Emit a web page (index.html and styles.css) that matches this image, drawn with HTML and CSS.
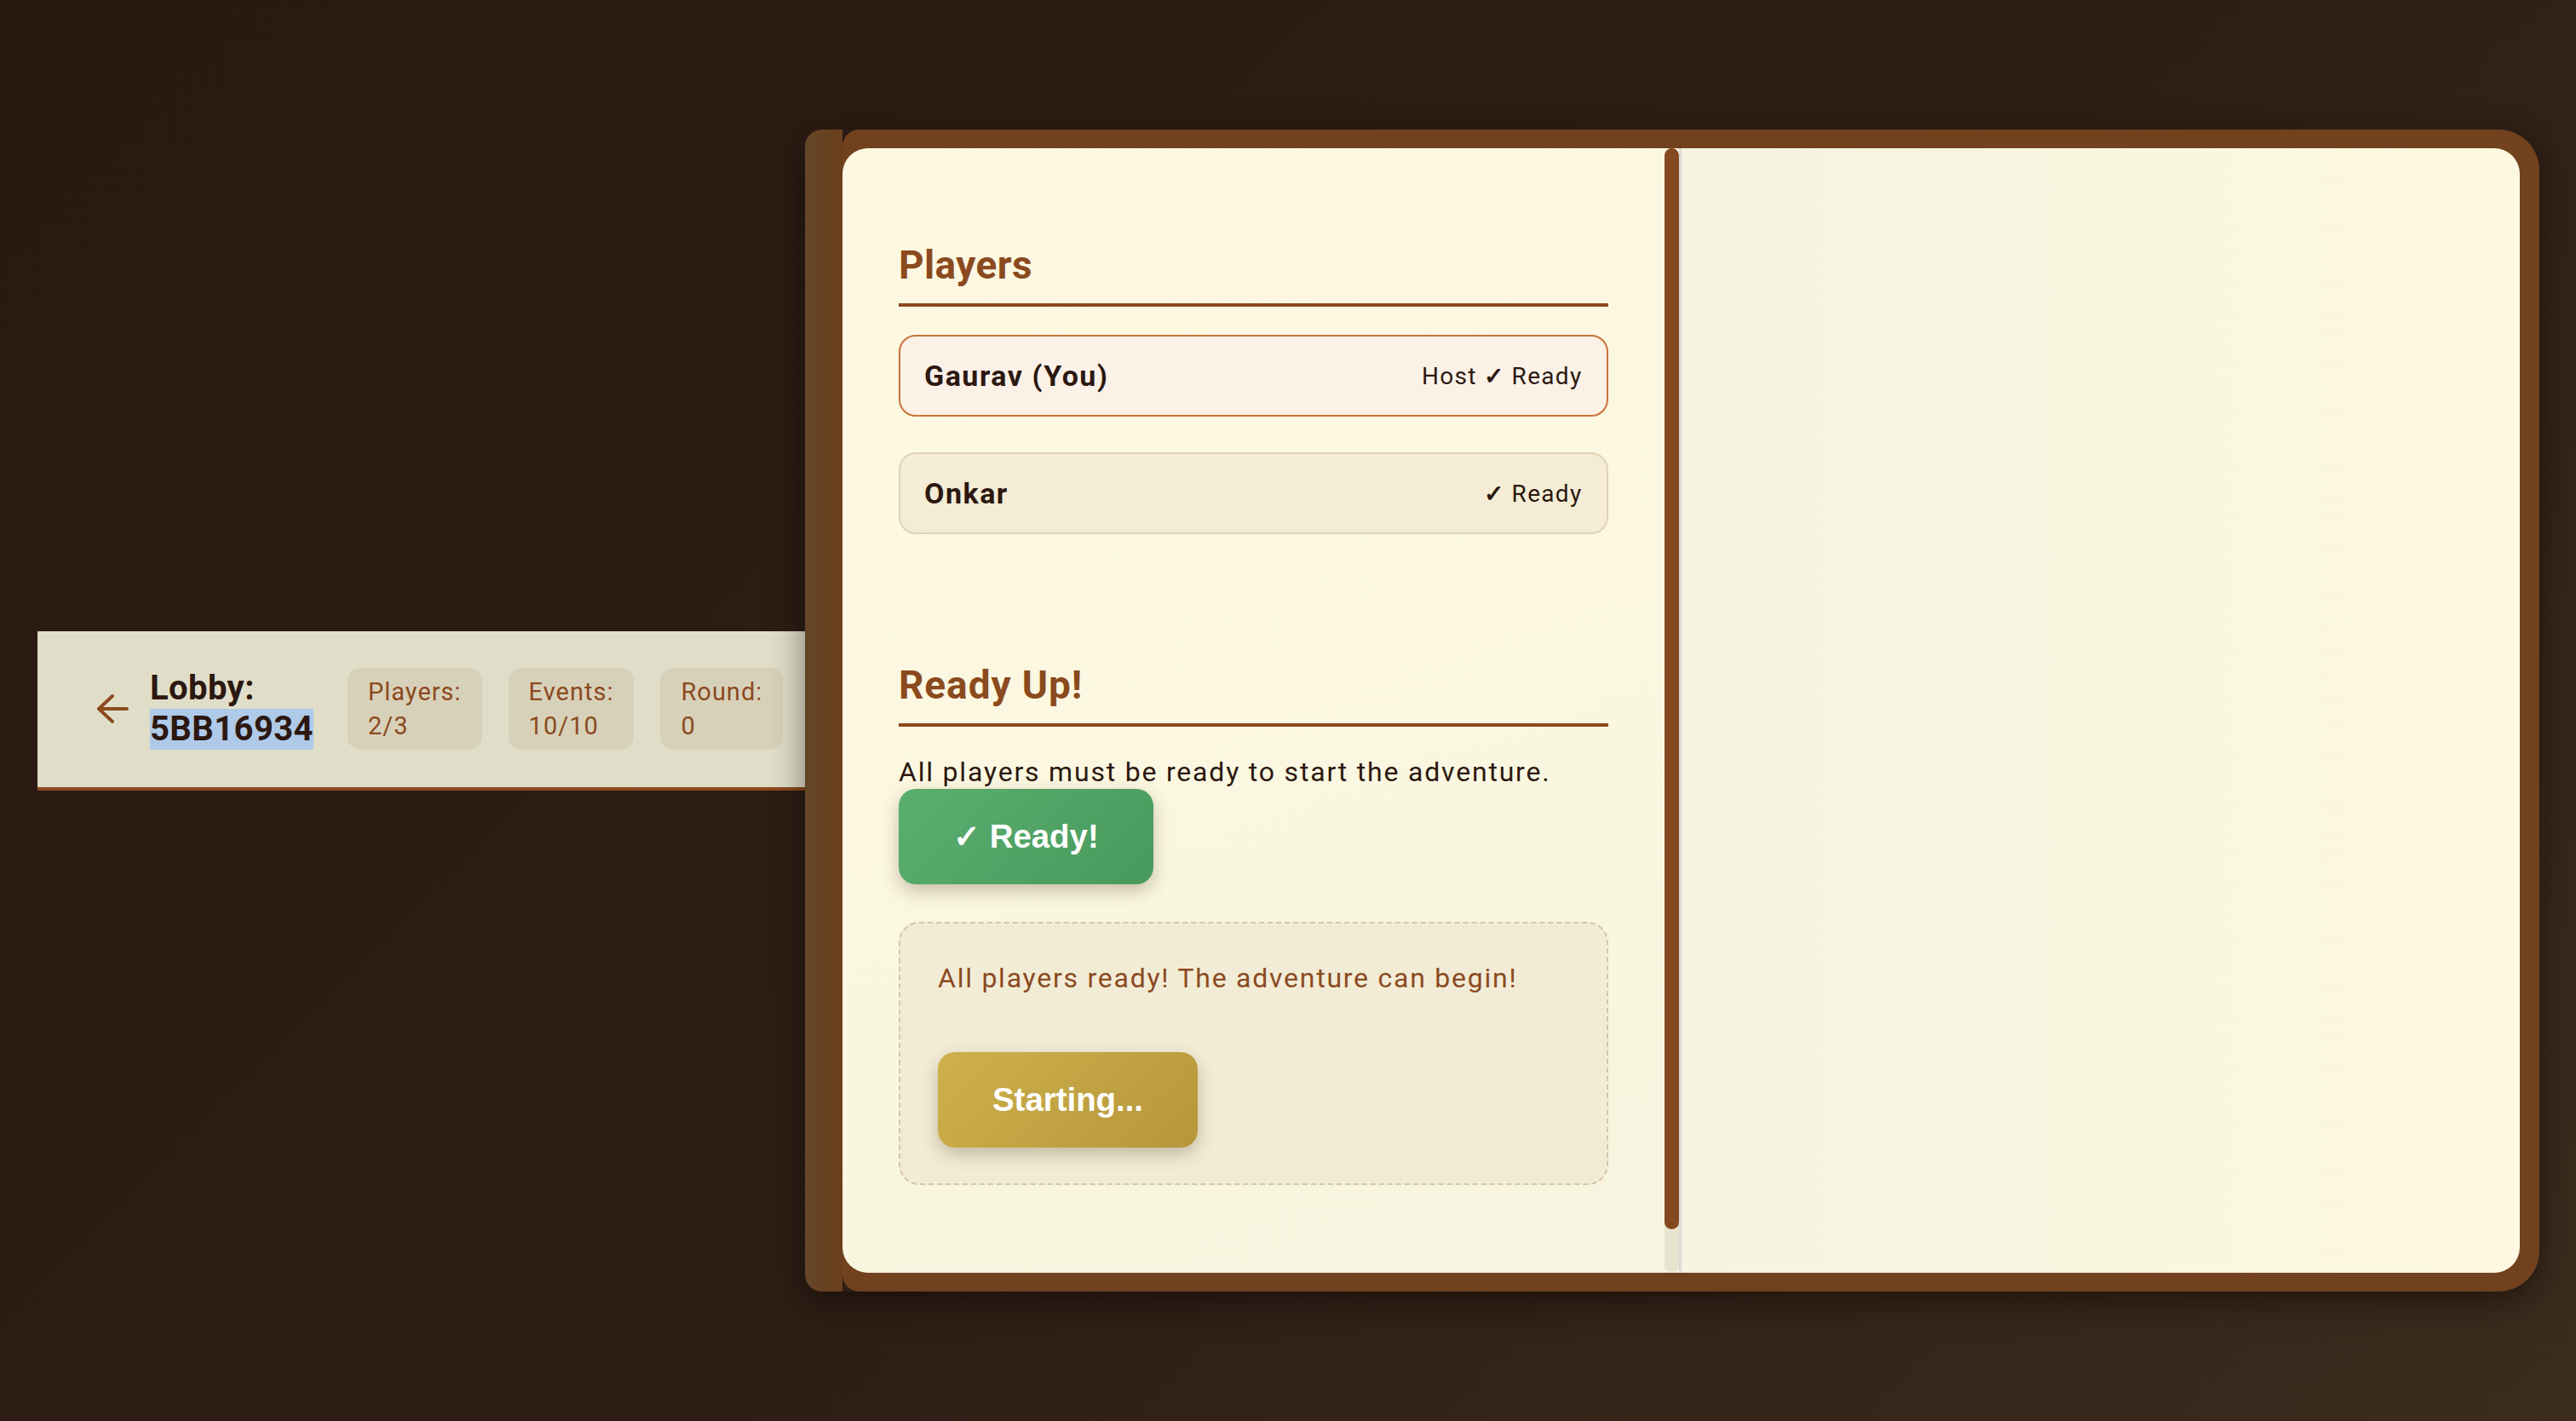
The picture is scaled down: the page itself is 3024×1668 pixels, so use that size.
FILE: index.html
```html
<!DOCTYPE html>
<html lang="en">
<head>
<meta charset="utf-8">
<title>Lobby 5BB16934</title>
<link rel="stylesheet" href="styles.css">
</head>
<body>
<div class="scene">
  <header class="lobby-bar">
    <button class="back-btn" aria-label="Back">
      <svg width="38" height="34" viewBox="0 0 38 34" fill="none" stroke="currentColor" stroke-width="3.8" stroke-linecap="round" stroke-linejoin="round"><path d="M36 17H3"/><path d="M19 2 3 17l16 15"/></svg>
    </button>
    <div class="lobby-title">
      <span>Lobby:</span>
      <span class="code">5BB16934</span>
    </div>
    <div class="stats">
      <div class="stat">Players:<br>2/3</div>
      <div class="stat">Events:<br>10/10</div>
      <div class="stat">Round:<br>0</div>
    </div>
  </header>

  <div class="book">
    <div class="spine"></div>
    <div class="cover">
      <div class="pages">
        <div class="page page-left">
          <div class="page-content">
            <section class="section players">
              <h2>Players</h2>
              <ul class="player-list">
                <li class="player me"><span class="name">Gaurav (You)</span><span class="status">Host <span class="check">✓</span> Ready</span></li>
                <li class="player"><span class="name">Onkar</span><span class="status"><span class="check">✓</span> Ready</span></li>
              </ul>
            </section>
            <section class="section ready">
              <h2>Ready Up!</h2>
              <p class="hint">All players must be ready to start the adventure.</p>
              <button class="btn btn-ready">✓ Ready!</button>
              <div class="start-box">
                <p>All players ready! The adventure can begin!</p>
                <button class="btn btn-start">Starting...</button>
              </div>
            </section>
          </div>
          <div class="scrollbar"><div class="scroll-thumb"></div></div>
        </div>
        <div class="page page-right"></div>
      </div>
    </div>
  </div>
</div>
</body>
</html>
```

FILE: styles.css
```css
html, body {
  margin: 0;
  padding: 0;
}

body {
  width: 3024px;
  height: 1668px;
  overflow: hidden;
  background: linear-gradient(135deg, #2a1911 0%, #2e1e15 55%, #3c2c1e 100%);
  font-family: Roboto, "Liberation Sans", sans-serif;
  color: #2c1810;
}

.scene {
  display: flex;
  align-items: center;
  height: 1668px;
  padding: 0 43px 0 44px;
  box-sizing: border-box;
}

/* ---------- lobby header ---------- */
.lobby-bar {
  flex: none;
  width: 901px;
  height: 187px;
  box-sizing: border-box;
  display: flex;
  align-items: center;
  padding: 0 22px 0 69px;
  background: #e0dec8;
  border-bottom: 4px solid #8b4a1e;
}

.back-btn {
  display: flex;
  padding: 0;
  margin: 0 25px 0 0;
  border: 0;
  background: none;
  color: #8b4a1e;
}

.lobby-title {
  display: flex;
  flex-direction: column;
  margin-right: 40px;
  font-size: 40px;
  line-height: 48px;
  font-weight: 700;
  letter-spacing: 0.4px;
  color: #2c1810;
}

.code {
  background: #afcae8;
}

.stats {
  display: flex;
  gap: 31px;
}

.stat {
  padding: 8px 24px;
  border-radius: 15px;
  background: #d8d1b9;
  color: #8b4a1e;
  font-size: 29px;
  line-height: 40px;
  letter-spacing: 1px;
}

/* ---------- book ---------- */
.book {
  flex: 1;
  height: 1364px;
  display: flex;
  z-index: 1;
  border-radius: 20px 48px 48px 20px;
  box-shadow: 0 12px 40px rgba(0, 0, 0, 0.45);
}

.spine {
  width: 44px;
  flex: none;
  border-radius: 20px 0 0 20px;
  background: linear-gradient(90deg, #654628 0%, #6b3f1d 100%);
}

.cover {
  flex: 1;
  display: flex;
  padding: 22px 23px 22px 0;
  border-radius: 20px 48px 48px 20px;
  background: #72411e;
}

.pages {
  flex: 1;
  display: grid;
  grid-template-columns: 1fr 1fr;
  grid-template-rows: minmax(0, 1fr);
  border-radius: 30px;
  overflow: hidden;
}

.page-left {
  display: flex;
  min-width: 0;
  border-right: 3px solid #dcdcd8;
  background: linear-gradient(160deg, #fef8e1 0%, #fbf7e0 50%, #f7f5df 100%);
}

.page-content {
  flex: 1;
  min-width: 0;
  overflow: hidden;
  padding: 109px 66px 0;
}

.scrollbar {
  flex: none;
  width: 17px;
  border-radius: 9px;
  background: #e8e4cf;
}

.scroll-thumb {
  height: 1269px;
  border-radius: 9px;
  background: #84491f;
}

.page-right {
  background: linear-gradient(90deg, #f5f4e1 0%, #f8f6e0 35%, #fdf8df 100%);
}

/* ---------- sections ---------- */
.section h2 {
  margin: 0 0 33px;
  padding-bottom: 17px;
  border-bottom: 4px solid #8b4a1e;
  font-size: 46px;
  line-height: 56px;
  font-weight: 700;
  letter-spacing: 0.4px;
  color: #8b4a1e;
}

.ready {
  margin-top: 149px;
}

.ready h2 {
  letter-spacing: 0.9px;
}

.player-list {
  display: flex;
  flex-direction: column;
  gap: 42px;
  margin: 0;
  padding: 0;
  list-style: none;
}

.player {
  display: flex;
  align-items: center;
  justify-content: space-between;
  height: 96px;
  box-sizing: border-box;
  padding: 0 28px;
  border: 2px solid #e2d3b4;
  border-radius: 20px;
  background: #f4ecd5;
}

.player.me {
  border-color: #c8733a;
  background: #fbf1e7;
}

.name {
  font-size: 34px;
  font-weight: 700;
  letter-spacing: 1.5px;
  color: #2c1810;
}

.status {
  font-size: 28px;
  letter-spacing: 1.3px;
  color: #2c1810;
}

.check {
  font-weight: 700;
}

.hint {
  margin: 0;
  font-size: 32px;
  line-height: 40px;
  letter-spacing: 1.8px;
  color: #2c1810;
}

.btn {
  display: block;
  margin: 0;
  padding: 34px 64px;
  border: 0;
  border-radius: 20px;
  color: #fff;
  font-family: "Liberation Sans", Arial, sans-serif;
  font-weight: 700;
  font-size: 38.4px;
  line-height: 44px;
  box-shadow: 0 8px 20px rgba(70, 50, 20, 0.28);
}

.btn-ready {
  background: linear-gradient(135deg, #5aae6e 0%, #489a5c 100%);
}

.btn-start {
  background: linear-gradient(135deg, #ceb14c 0%, #b5963a 100%);
}

.start-box {
  margin-top: 44px;
  padding: 44px 44px 42px;
  border: 2px dashed #d9c4a3;
  border-radius: 24px;
  background: #f2ecd6;
}

.start-box p {
  margin: 0 0 67px;
  font-size: 32px;
  line-height: 40px;
  letter-spacing: 1.75px;
  color: #8b4a1e;
}
```
